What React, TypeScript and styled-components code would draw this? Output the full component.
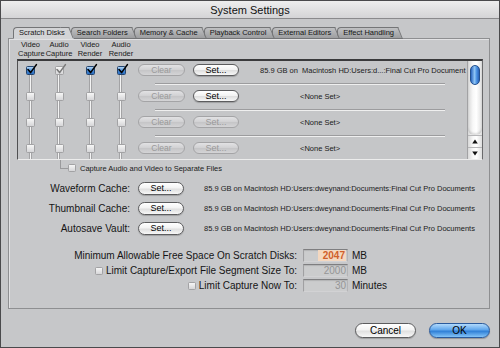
import { Fragment } from 'react'
import styled, { createGlobalStyle } from 'styled-components'

const colors = {
  window: '#c6c7c9',
  panel: '#c7c8ca',
  edge: '#8e8f91',
  text: '#141414',
  dim: '#959595',
  blueEdge: '#24456f',
}

const GlobalStyle = createGlobalStyle`
  html, body {
    margin: 0;
    padding: 0;
    background: ${colors.window};
  }
  body {
    font-family: 'Liberation Sans', Arial, sans-serif;
    color: ${colors.text};
  }
`

const Window = styled.div`
  width: 500px;
  height: 348px;
  box-sizing: border-box;
  border: 1px solid #4a4a4c;
  background: ${colors.window};
  display: flex;
  flex-direction: column;
  overflow: hidden;
`

const TitleBar = styled.div`
  flex: none;
  height: 17px;
  background: linear-gradient(#eeeeee, #d4d4d6);
  border-bottom: 1px solid #8a8a8c;
  display: flex;
  align-items: center;
  justify-content: center;
  font-size: 11px;
  color: #111;
`

const Body = styled.div`
  flex: 1;
  display: flex;
  flex-direction: column;
  padding: 8px 9px 0 7px;
`

const TabStrip = styled.div`
  display: flex;
  padding-left: 5px;
  margin-bottom: -1px;
  position: relative;
  z-index: 2;
`

const Tab = styled.div<{ $active?: boolean; $z: number }>`
  position: relative;
  z-index: ${(p) => p.$z};
  height: 10px;
  padding: 0 4px 0 5px;
  margin-right: 2px;
  font-size: 7.5px;
  line-height: 10px;
  white-space: nowrap;
  color: #161616;
  background: ${(p) =>
    p.$active ? '#d3d4d6' : 'linear-gradient(#bfc0c2, #9d9ea0)'};
  border: 1px solid #747577;
  border-right: none;
  border-bottom: 1px solid ${(p) => (p.$active ? '#d3d4d6' : '#747577')};
  border-top-left-radius: 4px;

  &::after {
    content: '';
    position: absolute;
    top: -1px;
    bottom: -1px;
    right: -5px;
    width: 8px;
    background: inherit;
    border-top: 1px solid #747577;
    border-right: 1px solid #747577;
    border-bottom: inherit;
    transform: skewX(22deg);
    transform-origin: bottom left;
    z-index: -1;
  }
`

const Panel = styled.div`
  flex: none;
  height: 271px;
  box-sizing: border-box;
  border: 1px solid ${colors.edge};
  box-shadow: inset 1px 1px 0 #e2e2e4;
  background: ${colors.panel};
  display: flex;
  flex-direction: column;
`

const ColumnHeads = styled.div`
  display: grid;
  grid-template-columns: 25px 32px 30px 32px;
  margin: 1px 0 0 9px;
  font-size: 7.5px;
  line-height: 9px;
  text-align: center;
  color: #1a1a1a;
`

const ListBox = styled.div`
  margin: 1px 6px 0 8px;
  height: 101px;
  box-sizing: border-box;
  border-top: 2px solid #3a3a3c;
  border-left: 1px solid #505052;
  border-right: 1px solid #6a6a6c;
  border-bottom: 1px solid #ececec;
  display: flex;
  background: #c5c6c8;
`

const ListRows = styled.div`
  flex: 1;
  overflow: hidden;
`

const DiskRow = styled.div`
  display: grid;
  grid-template-columns: 25px 32px 30px 32px 1fr;
  height: 26px;
`

const CheckCell = styled.div<{ $first?: boolean }>`
  display: flex;
  justify-content: center;
  align-items: flex-start;
  padding-top: 5px;
  background: linear-gradient(
      90deg,
      transparent calc(50% - 1.5px),
      #a3a3a5 calc(50% - 1.5px),
      #a3a3a5 calc(50% - 0.5px),
      #f4f4f4 calc(50% - 0.5px),
      #f4f4f4 calc(50% + 0.5px),
      #a3a3a5 calc(50% + 0.5px),
      #a3a3a5 calc(50% + 1.5px),
      transparent calc(50% + 1.5px)
    )
    no-repeat;
  background-position: 0 ${(p) => (p.$first ? 10 : 0)}px;
`

const ControlCell = styled.div`
  display: flex;
  flex-direction: column;
`

const ControlLine = styled.div`
  height: 18px;
  display: flex;
  align-items: center;
  gap: 8px;
  margin-left: 1px;
`

const RowRule = styled.div`
  margin: 4px 0 0 18px;
  width: 290px;
  border-top: 1px solid #9c9c9e;
  border-bottom: 1px solid #efefef;
`

const PathText = styled.span<{ $indent: number }>`
  margin-left: ${(p) => p.$indent}px;
  font-size: 7.5px;
  white-space: pre;
  color: #1a1a1a;
`

const ScrollBar = styled.div`
  width: 14px;
  flex: none;
  border-left: 1px solid #a2a2a4;
  background: linear-gradient(90deg, #d8d8d8, #f8f8f8 35%, #ffffff 60%, #dedede);
  display: flex;
  flex-direction: column;
`

const ScrollTrack = styled.div`
  flex: 1;
  padding: 4px 2px 0;
  border-bottom-left-radius: 6px;
  border-bottom-right-radius: 6px;
  box-shadow: inset 0 -2px 2px rgba(0, 0, 0, 0.12);
`

const ScrollThumb = styled.div`
  height: 20px;
  box-sizing: border-box;
  border-radius: 5px;
  border: 1px solid #22508e;
  background: linear-gradient(90deg, #2b66bf, #8fc5f5 45%, #4b92e2 70%, #2a62b8);
`

const ScrollArrow = styled.div`
  height: 11px;
  border-top: 1px solid #b6b6b8;
  display: flex;
  align-items: center;
  justify-content: center;
`

const SeparateRow = styled.div`
  display: flex;
  align-items: center;
  height: 14px;
  margin-top: 1px;
  padding-left: 51px;
  font-size: 7.5px;
  color: #1a1a1a;
`

const TreeElbow = styled.div`
  align-self: flex-start;
  margin-top: -1px;
  width: 7px;
  height: 8px;
  border-left: 1px solid #9a9a9c;
  border-bottom: 1px solid #9a9a9c;
`

const SeparateLabel = styled.span`
  margin-left: 4px;
`

const CacheGrid = styled.div`
  display: grid;
  grid-template-columns: 121px 46px 1fr;
  grid-auto-rows: 20px;
  align-items: center;
  column-gap: 8px;
  margin-top: 3px;
`

const FieldLabel = styled.div`
  display: flex;
  justify-content: flex-end;
  align-items: center;
  gap: 3px;
  font-size: 10px;
  white-space: nowrap;
  color: #151515;
`

const CachePath = styled.span`
  padding-left: 12px;
  font-size: 7.5px;
  white-space: nowrap;
  color: #1a1a1a;
`

const LimitGrid = styled.div`
  display: grid;
  grid-template-columns: 288px 51px auto;
  grid-auto-rows: 15px;
  align-items: center;
  margin-top: 10px;
`

const NumberBox = styled.div<{ $disabled?: boolean }>`
  margin-left: 6px;
  height: 13px;
  box-sizing: border-box;
  border: 1px solid;
  border-color: #7e7e80 #b4b4b6 #d2d2d4 #a0a0a2;
  background: #cbcccd;
  box-shadow: inset 0 1px 1px rgba(0, 0, 0, 0.12);
  display: flex;
  justify-content: flex-end;
  align-items: center;
  padding-right: 1px;
  font-size: 10px;
  color: ${(p) => (p.$disabled ? colors.dim : colors.text)};
`

const Selected = styled.span`
  background: #f4d8c0;
  color: #d0602a;
  font-weight: bold;
  padding: 0 1px 0 5px;
  line-height: 11px;
`

const Unit = styled.span`
  margin-left: 4px;
  font-size: 10px;
`

const Footer = styled.div`
  flex: 1;
  display: flex;
  justify-content: flex-end;
  align-items: flex-start;
  gap: 13px;
  padding: 14px 0 0;
`

type ButtonKind = 'normal' | 'disabled' | 'default'

const buttonLooks: Record<ButtonKind, string> = {
  normal: `
    background: linear-gradient(#ffffff 0%, #f3f3f3 45%, #e0e0e0 55%, #f7f7f7 100%);
    border: 1px solid #5c5c5e;
    color: #000;
    box-shadow: 0 1px 1px rgba(0, 0, 0, 0.2);
  `,
  disabled: `
    background: linear-gradient(#e2e2e4 0%, #d2d2d4 45%, #c6c6c8 55%, #d4d4d6 100%);
    border: 1px solid #a4a4a6;
    color: #9a9a9a;
  `,
  default: `
    background: linear-gradient(#b2dafc 0%, #5fa6ec 45%, #2f7fd6 55%, #84c4f8 100%);
    border: 1px solid #2a5a9c;
    color: #000;
    box-shadow: 0 1px 1px rgba(0, 0, 0, 0.25);
  `,
}

const PillButton = styled.button<{ $kind: ButtonKind; $w: number; $h: number; $size: number }>`
  width: ${(p) => p.$w}px;
  height: ${(p) => p.$h}px;
  flex: none;
  box-sizing: border-box;
  padding: 0;
  border-radius: ${(p) => Math.ceil(p.$h / 2)}px;
  font-family: inherit;
  font-size: ${(p) => p.$size}px;
  line-height: 1;
  display: flex;
  align-items: center;
  justify-content: center;
  ${(p) => buttonLooks[p.$kind]}
`

type CheckKind = 'on' | 'dim' | 'off'

const Box = styled.span<{ $kind: CheckKind; $size: number }>`
  position: relative;
  display: inline-block;
  flex: none;
  width: ${(p) => p.$size}px;
  height: ${(p) => p.$size}px;
  box-sizing: border-box;
  border-radius: 1.5px;
  border: 1px solid ${(p) => (p.$kind === 'on' ? colors.blueEdge : '#a2a2a4')};
  background: ${(p) =>
    p.$kind === 'on'
      ? 'linear-gradient(#b4d6f6, #4a8ed8 50%, #2a6cc0)'
      : 'linear-gradient(#f6f6f6, #d6d6d8)'};

  svg {
    position: absolute;
    left: 0;
    top: -3px;
    overflow: visible;
  }
`

function Check({ kind, size = 9 }: { kind: CheckKind; size?: number }) {
  return (
    <Box $kind={kind} $size={size}>
      {kind !== 'off' && (
        <svg width="10" height="10" viewBox="0 0 10 10">
          <path
            d="M1 5.5 L3.6 8.6 L9.4 0.6"
            fill="none"
            stroke={kind === 'on' ? '#000' : '#7a7a7a'}
            strokeWidth="1.6"
            strokeLinecap="round"
            strokeLinejoin="round"
          />
        </svg>
      )}
    </Box>
  )
}

function Arrow({ up }: { up?: boolean }) {
  return (
    <svg width="6" height="5" viewBox="0 0 6 5">
      <path d={up ? 'M3 0.5 L5.8 4.5 L0.2 4.5 Z' : 'M0.2 0.5 L5.8 0.5 L3 4.5 Z'} fill="#111" />
    </svg>
  )
}

const tabs = [
  'Scratch Disks',
  'Search Folders',
  'Memory & Cache',
  'Playback Control',
  'External Editors',
  'Effect Handling',
]

const diskRows: {
  checks: CheckKind[]
  setOn: boolean
  path: string
  indent: number
}[] = [
  {
    checks: ['on', 'dim', 'on', 'on'],
    setOn: true,
    path: '85.9 GB on  Macintosh HD:Users:d...:Final Cut Pro Document',
    indent: 13,
  },
  { checks: ['off', 'off', 'off', 'off'], setOn: true, path: '<None Set>', indent: 53 },
  { checks: ['off', 'off', 'off', 'off'], setOn: false, path: '<None Set>', indent: 53 },
  { checks: ['off', 'off', 'off', 'off'], setOn: false, path: '<None Set>', indent: 53 },
]

const cachePath = '85.9 GB on Macintosh HD:Users:dweynand:Documents:Final Cut Pro Documents'
const caches = ['Waveform Cache:', 'Thumbnail Cache:', 'Autosave Vault:']

const App = () => {
  return (
    <>
      <GlobalStyle />
      <Window>
        <TitleBar>System Settings</TitleBar>
        <Body>
          <TabStrip>
            {tabs.map((label, i) => (
              <Tab key={label} $active={i === 0} $z={i === 0 ? 10 : 8 - i}>
                {label}
              </Tab>
            ))}
          </TabStrip>
          <Panel>
            <ColumnHeads>
              <div>Video<br />Capture</div>
              <div>Audio<br />Capture</div>
              <div>Video<br />Render</div>
              <div>Audio<br />Render</div>
            </ColumnHeads>
            <ListBox>
              <ListRows>
                {diskRows.map((row, r) => (
                  <DiskRow key={r}>
                    {row.checks.map((c, i) => (
                      <CheckCell key={i} $first={r === 0}>
                        <Check kind={c} />
                      </CheckCell>
                    ))}
                    <ControlCell>
                      <ControlLine>
                        <PillButton $kind="disabled" $w={47} $h={12} $size={8.5}>
                          Clear
                        </PillButton>
                        <PillButton $kind={row.setOn ? 'normal' : 'disabled'} $w={46} $h={12} $size={9}>
                          Set...
                        </PillButton>
                        <PathText $indent={row.indent}>{row.path}</PathText>
                      </ControlLine>
                      <RowRule />
                    </ControlCell>
                  </DiskRow>
                ))}
              </ListRows>
              <ScrollBar>
                <ScrollTrack>
                  <ScrollThumb />
                </ScrollTrack>
                <ScrollArrow>
                  <Arrow up />
                </ScrollArrow>
                <ScrollArrow>
                  <Arrow />
                </ScrollArrow>
              </ScrollBar>
            </ListBox>
            <SeparateRow>
              <TreeElbow />
              <Check kind="off" size={8} />
              <SeparateLabel>Capture Audio and Video to Separate Files</SeparateLabel>
            </SeparateRow>
            <CacheGrid>
              {caches.map((label) => (
                <Fragment key={label}>
                  <FieldLabel>{label}</FieldLabel>
                  <PillButton $kind="normal" $w={46} $h={13} $size={9}>
                    Set...
                  </PillButton>
                  <CachePath>{cachePath}</CachePath>
                </Fragment>
              ))}
            </CacheGrid>
            <LimitGrid>
              <FieldLabel>Minimum Allowable Free Space On Scratch Disks:</FieldLabel>
              <NumberBox>
                <Selected>2047</Selected>
              </NumberBox>
              <Unit>MB</Unit>
              <FieldLabel>
                <Check kind="off" size={8} />
                Limit Capture/Export File Segment Size To:
              </FieldLabel>
              <NumberBox $disabled>2000</NumberBox>
              <Unit>MB</Unit>
              <FieldLabel>
                <Check kind="off" size={8} />
                Limit Capture Now To:
              </FieldLabel>
              <NumberBox $disabled>30</NumberBox>
              <Unit>Minutes</Unit>
            </LimitGrid>
          </Panel>
          <Footer>
            <PillButton $kind="normal" $w={61} $h={15} $size={10}>
              Cancel
            </PillButton>
            <PillButton $kind="default" $w={61} $h={15} $size={10}>
              OK
            </PillButton>
          </Footer>
        </Body>
      </Window>
    </>
  )
}

export default App
